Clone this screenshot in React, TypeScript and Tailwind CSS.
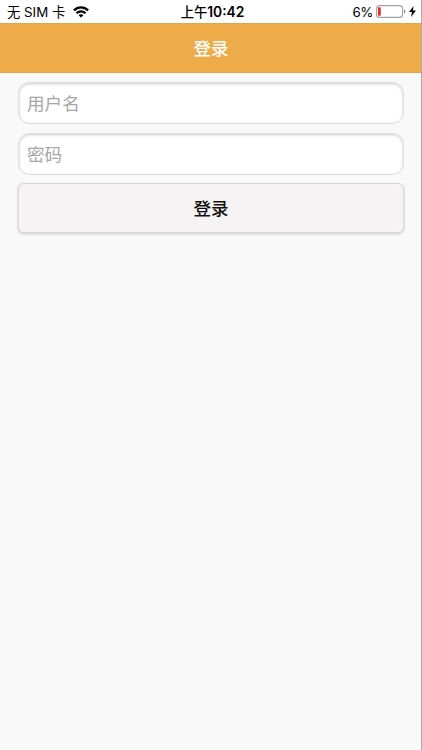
import { useState } from "react";

const fields = [
  { id: "username", type: "text", placeholder: "用户名" },
  { id: "password", type: "password", placeholder: "密码" },
];

function WifiIcon() {
  return (
    <svg width="16" height="12" viewBox="0 0 16 12" fill="none" stroke="#000" strokeWidth="2.3">
      <path d="M0.9 4.4C4.9 0.4 11.1 0.4 15.1 4.4" />
      <path d="M3.5 7.3C6 4.8 10 4.8 12.5 7.3" />
      <path d="M8 11.6L5.6 9.2C6.9 7.9 9.1 7.9 10.4 9.2Z" fill="#000" stroke="none" />
    </svg>
  );
}

function BatteryIcon() {
  return (
    <svg width="30" height="13" viewBox="0 0 30 13" fill="none">
      <rect x="0.6" y="0.6" width="26" height="11.8" rx="3" stroke="#a2a2a2" strokeWidth="1.1" />
      <rect x="2" y="2.2" width="2.8" height="8.6" rx="0.8" fill="#e0312f" />
      <path d="M28 4.5C29.8 5 29.8 8 28 8.5Z" fill="#8a8a8a" />
    </svg>
  );
}

function BoltIcon() {
  return (
    <svg width="7" height="11" viewBox="0 0 7 11" fill="#000">
      <path d="M4.6 0L0 6.1H3L2 11L7 4.5H3.9Z" />
    </svg>
  );
}

function StatusBar() {
  return (
    <div className="grid h-[23px] grid-cols-3 items-center bg-white pt-px pr-[5px] pl-[7px] text-[13.3px] leading-none text-black">
      <div className="flex items-center gap-2">
        <span className="pt-[2px] whitespace-nowrap">无 SIM 卡</span>
        <WifiIcon />
      </div>
      <span className="pt-[2px] pl-[2px] text-center font-medium whitespace-nowrap">
        上午<span className="text-[13.8px] font-semibold">10:42</span>
      </span>
      <div className="flex items-center justify-end">
        <span className="mr-[3px] pt-[2px] tracking-[-0.4px]">6%</span>
        <BatteryIcon />
        <span className="ml-[3px]">
          <BoltIcon />
        </span>
      </div>
    </div>
  );
}

export default function App() {
  const [values, setValues] = useState<Record<string, string>>({});

  return (
    <div className="h-[750px] w-full overflow-hidden border-r border-[#a9a9a9] bg-[#f9f9f9] font-['Inter','Noto_Sans_CJK_SC',sans-serif]">
      <StatusBar />

      <header className="flex h-[50px] items-center justify-center border-y border-[#e3a548] bg-[#edab4a]">
        <h1 className="pt-px pl-px text-[17.5px] leading-none font-medium text-white">登录</h1>
      </header>

      <form className="flex flex-col pt-[9px] pr-[17px] pl-[18px]" onSubmit={(e) => e.preventDefault()}>
        {fields.map((field) => (
          <input
            key={field.id}
            type={field.type}
            placeholder={field.placeholder}
            value={values[field.id] ?? ""}
            onChange={(e) => setValues({ ...values, [field.id]: e.target.value })}
            className="mb-[9px] h-[42px] w-full rounded-[11px] border border-[#dddddd] bg-white px-2 text-[17.6px] text-black shadow-[inset_0_1px_3px_rgba(0,0,0,0.2)] outline-none placeholder:text-[#a6a6a6]"
          />
        ))}
        <button
          type="submit"
          className="-mt-px h-[50px] w-full rounded-[6px] border border-[#d8d8d8] bg-[#f5f3f4] pt-[2px] text-[17.5px] font-medium text-[#111] shadow-[0_1px_3px_rgba(0,0,0,0.2)]"
        >
          登录
        </button>
      </form>
    </div>
  );
}
